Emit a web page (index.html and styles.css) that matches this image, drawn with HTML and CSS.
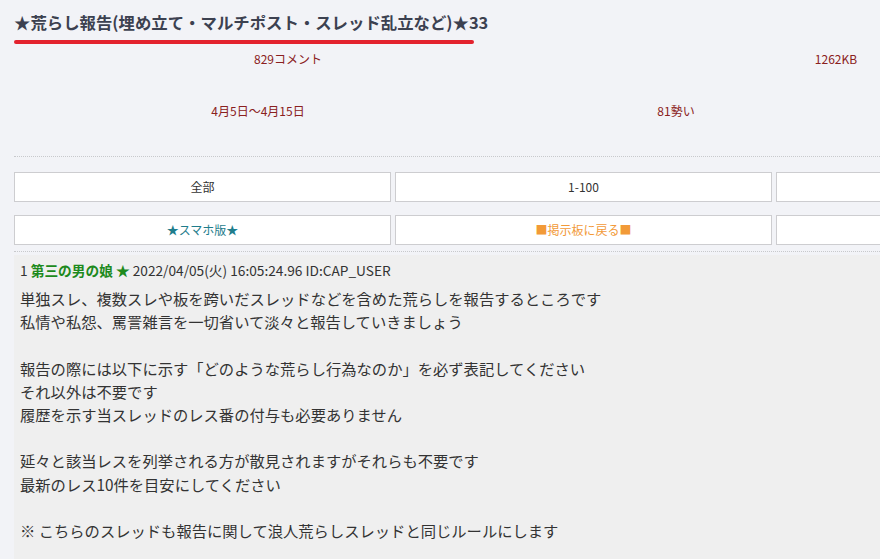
FILE: index.html
```html
<!DOCTYPE html>
<html lang="ja">
<head>
<meta charset="utf-8">
<title>荒らし報告</title>
<link rel="stylesheet" href="styles.css">
</head>
<body>
<div class="page">
  <h1 class="title">★荒らし報告(埋め立て・マルチポスト・スレッド乱立など)★33</h1>
  <div class="underline"></div>
  <div class="stats stats-a">
    <div class="cell">829コメント</div>
    <div class="cell">1262KB</div>
  </div>
  <div class="stats stats-b">
    <div class="cell">4月5日～4月15日</div>
    <div class="cell">81勢い</div>
  </div>
  <div class="dots"></div>
  <div class="btns">
    <a class="btn">全部</a>
    <a class="btn">1-100</a>
    <a class="btn"></a>
  </div>
  <div class="btns">
    <a class="btn sp">★スマホ版★</a>
    <a class="btn back">■掲示板に戻る■</a>
    <a class="btn"></a>
  </div>
  <div class="dots dots2"></div>
  <div class="post">
    <div class="post-head"><span class="num">1</span> <span class="name">第三の男の娘 ★</span> <span class="date">2022/04/05(火) 16:05:24.96 ID:CAP_USER</span></div>
    <div class="post-body">
      <p>単独スレ、複数スレや板を跨いだスレッドなどを含めた荒らしを報告するところです<br>私情や私怨、罵詈雑言を一切省いて淡々と報告していきましょう</p>
      <p>報告の際には以下に示す「どのような荒らし行為なのか」を必ず表記してください<br>それ以外は不要です<br>履歴を示す当スレッドのレス番の付与も必要ありません</p>
      <p>延々と該当レスを列挙される方が散見されますがそれらも不要です<br>最新のレス10件を目安にしてください</p>
      <p>※ こちらのスレッドも報告に関して浪人荒らしスレッドと同じルールにします</p>
    </div>
  </div>
</div>
</body>
</html>
```
FILE: styles.css
```css
html {
  overflow: hidden;
  background: #f2f3f7;
}
body {
  margin: 0;
  background: #f2f3f7;
  font-family: "Noto Sans CJK JP", "Noto Sans", sans-serif;
  color: #333;
}
.page {
  width: 1140px;
  padding: 0 0 0 14px;
}
.title {
  margin: 0;
  padding-top: 10px;
  font-size: 16.4px;
  line-height: 24px;
  font-weight: bold;
  color: #3c4150;
  white-space: nowrap;
}
.underline {
  width: 460px;
  height: 4px;
  border-radius: 2px;
  background: #e3222e;
  margin-top: 6px;
}
.stats {
  display: grid;
  font-size: 12px;
  line-height: 24px;
  color: #8a2020;
  text-align: center;
}
.stats-a {
  margin-top: 3px;
  grid-template-columns: 548px 548px;
}
.stats-b {
  margin-top: 28px;
  grid-template-columns: 488px 348px;
}
.dots {
  margin-top: 33px;
  height: 0;
  border-top: 1px dotted #c8c9cc;
}
.btns {
  display: grid;
  grid-template-columns: repeat(3, 377px);
  column-gap: 4px;
  margin-top: 15px;
}
.btns + .btns {
  margin-top: 13px;
}
.btn {
  display: block;
  height: 28px;
  line-height: 28px;
  background: #fff;
  border: 1px solid #cdcdd0;
  text-align: center;
  font-size: 12px;
  color: #333;
}
.btn.sp {
  color: #1f7d8c;
}
.btn.back {
  color: #f29a38;
}
.dots2 {
  margin-top: 6px;
}
.post {
  margin-top: 3px;
  background: #efefef;
  padding: 4px 6px 20px 6px;
}
.post-head {
  font-size: 13.7px;
  line-height: 22px;
  color: #333;
}
.name {
  color: #1d8a1d;
  font-weight: bold;
}
.post-body {
  margin-top: 6px;
  font-size: 15.3px;
  line-height: 23.2px;
  color: #333;
}
.post-body p {
  margin: 0 0 23.2px 0;
}
```
